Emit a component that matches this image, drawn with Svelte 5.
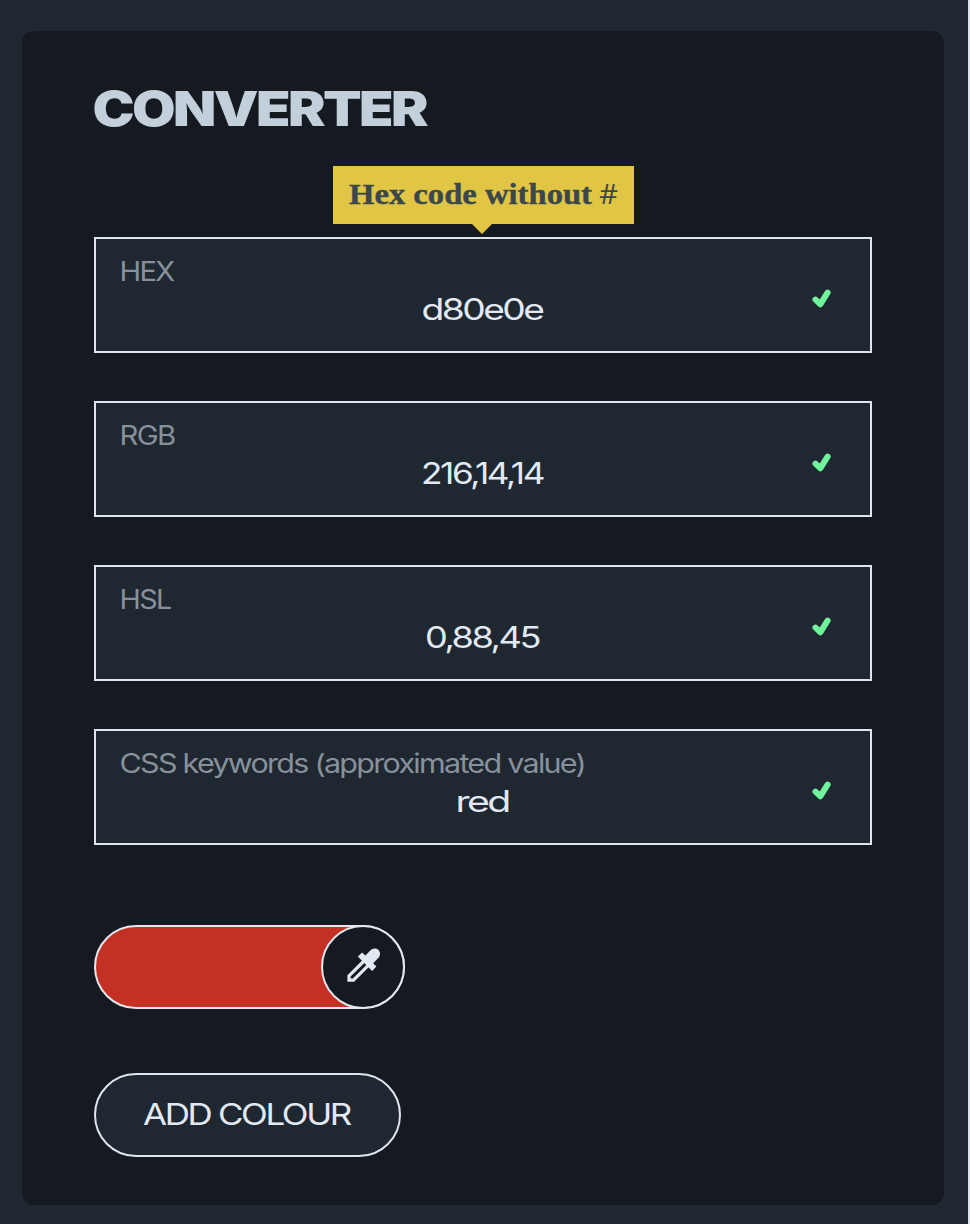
<script>
  const fields = [
    { label: 'HEX', labelX: 24.5, labelW: 54, value: 'd80e0e', valueX: 325.5, valueW: 121 },
    { label: 'RGB', labelX: 24.5, labelW: 55, value: '216,14,14', valueX: 325, valueW: 122 },
    { label: 'HSL', labelX: 24.5, labelW: 51, value: '0,88,45', valueX: 329, valueW: 114 },
    { label: 'CSS keywords (approximated value)', labelX: 24.5, labelW: 465.5, value: 'red', valueX: 359.5, valueW: 53 }
  ];
</script>

{#snippet line(cls, text, x, y, width, height)}
  <svg class="line" {height}>
    <text class={cls} {x} {y} textLength={width} lengthAdjust="spacingAndGlyphs">{text}</text>
  </svg>
{/snippet}

<main>
  <section class="panel">
    <h1>{@render line('title', 'CONVERTER', -1.5, 43.7, 333.5, 60)}</h1>

    <div class="fields">
      {#each fields as field, i}
        <div class="field">
          {#if i === 0}
            <div class="tooltip">
              <svg class="line" height="58">
                <text class="tip" x="16" y="38" textLength="243" lengthAdjust="spacingAndGlyphs">Hex code without</text>
                <text class="hash" x="266" y="38" textLength="19" lengthAdjust="spacingAndGlyphs">#</text>
              </svg>
            </div>
          {/if}
          {@render line('label', field.label, field.labelX - 1, 26, field.labelW, 34)}
          {@render line('value', field.value, field.valueX, 30.8, field.valueW, 40)}
          <svg class="check" viewBox="0 0 20 20">
            <path d="M3.5 10.6 L8.4 15.2 L15.6 3.6" />
          </svg>
        </div>
      {/each}
    </div>

    <div class="picker">
      <div class="dropper">
        <svg viewBox="0 0 36 36">
          <path class="tube" d="M19.5 12.5 L4 27.8 V32.2 H8.5 L23.8 16.8" />
          <path class="bulb" d="M12.8 8.6 L17.2 4.4 L20.4 7.4 L25.8 2 Q29.7 -0.8 33.4 1.8 Q36.4 5.2 34 9.2 L28.2 15.2 L31.4 18.6 L27.1 22.9 Z" />
        </svg>
      </div>
    </div>

    <button>{@render line('action', 'ADD COLOUR', 47, 49.5, 207, 80)}</button>
  </section>
</main>

<style>
  :global(body) {
    background: #1f2730;
  }
  main {
    box-sizing: border-box;
    height: 1224px;
    padding: 31px 24px 20px 22px;
    border-right: 2px solid #dce3ed;
    background: #1f2730;
    overflow: hidden;
  }
  .panel {
    box-sizing: border-box;
    width: 922px;
    height: 1174px;
    padding: 51px 72px 0;
    border-radius: 12px;
    background: #151a20;
  }
  h1 {
    margin: 0 0 95px;
    height: 60px;
  }
  .line {
    display: block;
    width: 100%;
    overflow: visible;
  }
  text {
    font-family: Inter, 'Liberation Sans', sans-serif;
  }
  .title {
    font-size: 48px;
    font-weight: 900;
    letter-spacing: -2.2px;
    fill: #c3cfdb;
  }
  .fields {
    display: flex;
    flex-direction: column;
    gap: 48px;
  }
  .field {
    position: relative;
    box-sizing: border-box;
    height: 116px;
    padding-top: 16px;
    border: 2px solid #dfe5ee;
    background: #1f2730;
  }
  .label {
    font-size: 26.5px;
    letter-spacing: -1.5px;
    fill: #87919c;
  }
  .value {
    font-size: 29.5px;
    letter-spacing: -2px;
    fill: #e3e9f3;
  }
  .check {
    position: absolute;
    right: 38px;
    top: 50px;
    width: 20px;
    height: 20px;
  }
  .check path {
    fill: none;
    stroke: #70f49c;
    stroke-width: 6;
    stroke-linecap: round;
    stroke-linejoin: round;
  }
  .tooltip {
    position: absolute;
    left: 237px;
    top: -73px;
    width: 301px;
    height: 58px;
    background: #e1c545;
  }
  .tooltip::after {
    content: '';
    position: absolute;
    left: 139px;
    top: 58px;
    border: 10px solid transparent;
    border-top-color: #e1c545;
    border-bottom: 0;
  }
  .tip {
    font-family: 'Liberation Serif', serif;
    font-size: 30px;
    font-weight: 700;
    fill: #3b474c;
    stroke: #3b474c;
    stroke-width: 0.4;
  }
  .hash {
    font-family: 'Open Sans', sans-serif;
    font-size: 27px;
    font-weight: 500;
    fill: #3b474c;
  }
  .picker {
    box-sizing: border-box;
    display: flex;
    justify-content: flex-end;
    width: 311px;
    height: 84px;
    margin-top: 80px;
    border: 2px solid #e3e7ef;
    border-radius: 42px;
    background: #c53024;
  }
  .dropper {
    box-sizing: border-box;
    flex: none;
    display: grid;
    place-items: center;
    width: 84px;
    height: 84px;
    margin: -2px;
    border: 2px solid #e3e7ef;
    border-radius: 50%;
    background: #151a20;
  }
  .dropper svg {
    width: 36px;
    height: 36px;
    margin-top: -3px;
  }
  .tube {
    fill: none;
    stroke: #e3e9f3;
    stroke-width: 3.2;
  }
  .bulb {
    fill: #e3e9f3;
  }
  button {
    display: block;
    box-sizing: border-box;
    width: 307px;
    height: 84px;
    margin-top: 64px;
    padding: 0;
    border: 2px solid #dfe5ee;
    border-radius: 42px;
    background: #1f2730;
  }
  .action {
    font-size: 29.8px;
    letter-spacing: -2px;
    fill: #e3e9f3;
  }
</style>
